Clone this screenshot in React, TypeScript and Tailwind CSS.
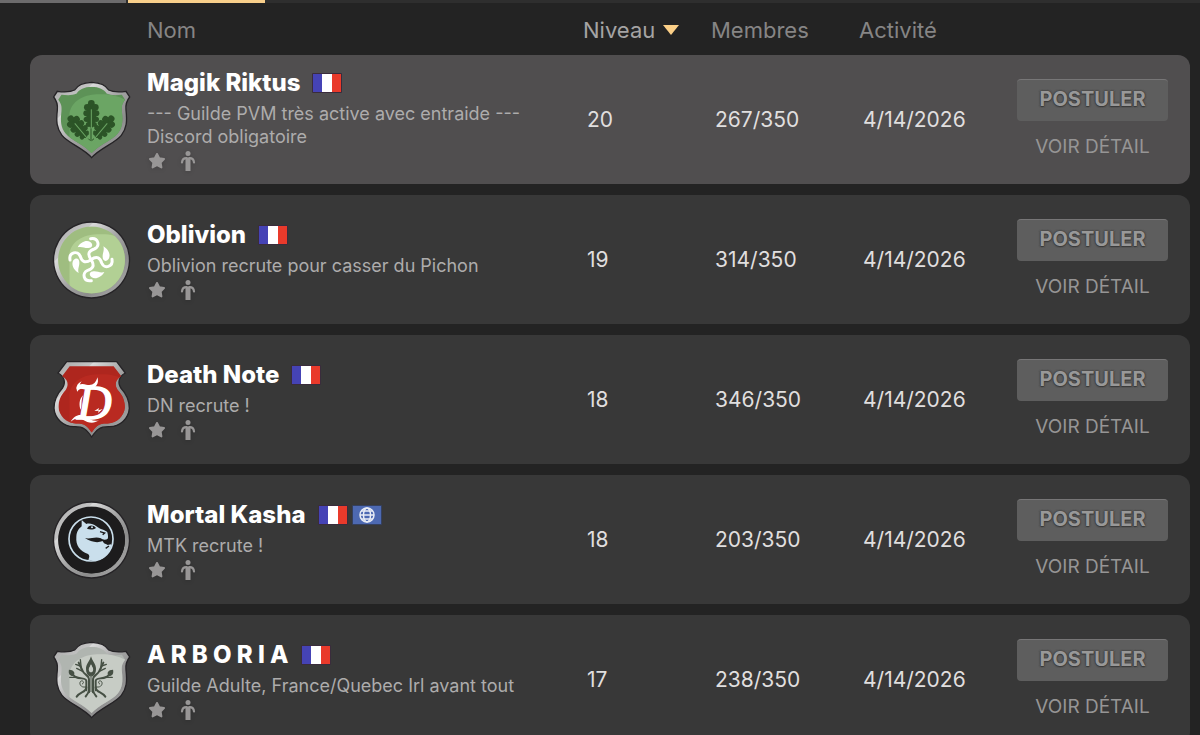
import type { ReactNode } from 'react'

type Flag = 'fr' | 'intl'

interface Guild {
  name: string
  description: string
  flags: Flag[]
  level: number
  members: string
  activity: string
  emblem: ReactNode
}

const SHIELD =
  'M155 67C130 68 112 76 104 90C88 98 68 96 52 94L41 111C50 122 54 132 52 150C48 185 50 205 66 226C85 250 130 264 155 293C180 264 225 250 244 226C260 205 262 185 258 150C256 132 260 122 269 111L258 94C242 96 222 98 206 90C198 76 180 68 155 67Z'
const CREST =
  'M80 65L230 65L256 99C236 110 232 128 243 145C262 165 268 185 268 205C266 235 240 262 205 260C180 260 170 268 155 291C140 268 130 260 105 260C70 262 44 235 42 205C42 185 48 165 67 145C78 128 74 110 54 99Z'
const ROUND = 'M155 66A114 114 0 1 1 154 66Z'

interface EmblemProps {
  id: string
  outline: string
  base: string
  shine: string
  children: ReactNode
}

function Emblem({ id, outline, base, shine, children }: EmblemProps) {
  return (
    <svg viewBox="33 60 240 240" className="mx-auto block size-20" aria-hidden="true">
      <defs>
        <linearGradient id={`${id}-metal`} x1="0" y1="0" x2="1" y2="1">
          <stop offset="0" stopColor="#a5a5a5" />
          <stop offset="0.26" stopColor="#c4c4c4" />
          <stop offset="0.27" stopColor="#dadada" />
          <stop offset="0.5" stopColor="#a4a4a4" />
          <stop offset="0.7" stopColor="#8c8c8c" />
          <stop offset="1" stopColor="#b5b5b5" />
        </linearGradient>
        <clipPath id={`${id}-field`}>
          <path d={outline} transform="translate(155 179) scale(.88) translate(-155 -179)" />
        </clipPath>
      </defs>
      <path d={outline} fill={`url(#${id}-metal)`} stroke="#252326" strokeWidth="4" />
      <g clipPath={`url(#${id}-field)`}>
        <rect x="33" y="60" width="240" height="240" fill={base} />
        <path
          d="M92 300C86 250 90 210 88 165C92 124 130 105 170 103C215 100 245 110 273 130V300Z"
          fill={shine}
        />
      </g>
      {children}
    </svg>
  )
}

function Leaf({ transform }: { transform: string }) {
  return (
    <g transform={transform}>
      <g fill="#2c5427">
        <ellipse cx="0" cy="-48" rx="15" ry="38" />
        <circle cx="0" cy="-83" r="10" />
        <circle cx="-12" cy="-71" r="10" />
        <circle cx="12" cy="-71" r="10" />
        <circle cx="-15" cy="-53" r="9" />
        <circle cx="15" cy="-53" r="9" />
        <circle cx="-15" cy="-35" r="8" />
        <circle cx="15" cy="-35" r="8" />
        <circle cx="-10" cy="-19" r="7" />
        <circle cx="10" cy="-19" r="7" />
      </g>
      <path d="M0 -65V0" stroke="#6ba564" strokeWidth="3" />
    </g>
  )
}

function OakEmblem() {
  return (
    <Emblem id="oak" outline={SHIELD} base="#5d9257" shine="#6ba564">
      <Leaf transform="translate(146 240) rotate(-40)" />
      <Leaf transform="translate(160 240) rotate(40)" />
      <Leaf transform="translate(154 213)" />
      <path d="M153 205V242M145 236L151 242M162 236L155 242" stroke="#2c5427" strokeWidth="3" fill="none" />
      <path d="M148 204V233M158 204V233" stroke="#6ba564" strokeWidth="3" />
    </Emblem>
  )
}

function SwirlArm({ angle }: { angle: number }) {
  return (
    <g transform={`rotate(${angle} 153 179)`}>
      <path
        d="M153 179C140 160 149 151 163 147C182 139 175 112 152 116"
        fill="none"
        stroke="#fff"
        strokeWidth="9"
        strokeLinecap="round"
      />
      <path d="M113 142C122 126 139 119 151 126C161 134 157 144 145 144C134 145 125 138 113 142Z" fill="#fff" />
    </g>
  )
}

function SwirlEmblem() {
  return (
    <Emblem id="swirl" outline={ROUND} base="#9fbd80" shine="#b2d094">
      <SwirlArm angle={0} />
      <SwirlArm angle={90} />
      <SwirlArm angle={180} />
      <SwirlArm angle={270} />
    </Emblem>
  )
}

function LetterEmblem() {
  return (
    <Emblem id="letter" outline={CREST} base="#ae261e" shine="#b92a21">
      <text
        x="111"
        y="237"
        fill="#fff"
        stroke="#fff"
        strokeWidth="4"
        fontSize="144"
        fontStyle="italic"
        fontFamily="Liberation Serif, serif"
      >
        D
      </text>
      <path
        d="M112 155C104 137 119 128 139 134C157 139 168 129 172 112C179 130 167 147 148 147C133 147 121 140 112 155Z"
        fill="#fff"
      />
      <path d="M109 146C110 136 114 129 125 124C117 134 119 138 122 142Z" fill="#fff" />
      <path d="M130 165C122 180 127 194 122 209C117 198 116 177 130 165Z" fill="#fff" />
      <path
        d="M92 245C102 226 121 219 138 230C151 238 161 246 177 241C160 253 143 248 130 240C115 232 105 236 92 245Z"
        fill="#fff"
      />
      <path d="M163 213L177 204L175 211L188 207L174 219L176 212Z" fill="#fff" />
    </Emblem>
  )
}

function DragonEmblem() {
  return (
    <Emblem id="dragon" outline={ROUND} base="#1d1c1d" shine="#1d1c1d">
      <circle cx="153" cy="177" r="66" fill="none" stroke="#cadfec" strokeWidth="5" />
      <path
        d="M125 120L139 132C148 129 160 132 169 139C181 149 195 149 202 157C205 168 205 176 201 181L190 184C190 192 198 191 203 195L213 193C215 207 205 222 195 230C181 241 163 244 145 239C149 231 149 225 144 222C119 214 107 195 109 171C110 153 117 146 125 139Z"
        fill="#cadfec"
      />
      <path d="M141 146C147 134 159 134 168 144C159 150 149 149 141 146Z" fill="#1d1c1d" />
      <circle cx="156" cy="142" r="3" fill="#cadfec" />
      <path
        d="M135 174C151 179 164 168 183 175C190 181 197 180 204 176L209 183L198 184L204 193L194 190L187 183C174 190 151 186 135 174Z"
        fill="#1d1c1d"
      />
      <path d="M180 155L194 159L188 164M197 205L207 198" stroke="#1d1c1d" strokeWidth="4" fill="none" />
    </Emblem>
  )
}

// One half of the tree, mirrored for the other side
function TreeHalf() {
  return (
    <g>
      <g fill="none" stroke="#465044" strokeLinecap="round">
        <path d="M147 217V180C147 163 133 166 128 153L116 128" strokeWidth="6" />
        <path d="M139 211V183C139 172 122 178 107 171L97 164" strokeWidth="6" />
        <path d="M139 202C138 218 120 215 110 230M147 211C145 221 139 226 137 229" strokeWidth="6" />
        <path d="M128 154L110 145M121 138L107 133M124 147L121 119M109 172L89 172" strokeWidth="4" />
        <path d="M136 201C122 204 116 190 122 184C128 179 135 188 127 192" strokeWidth="3" />
        <path d="M150 167C136 156 142 144 147 138" strokeWidth="5" />
      </g>
      <path d="M87 149C102 149 106 158 101 168C89 169 84 160 87 149Z" fill="#465044" />
    </g>
  )
}

function TreeEmblem() {
  return (
    <Emblem id="tree" outline={SHIELD} base="#b0b5b0" shine="#c7ccc5">
      <TreeHalf />
      <g transform="translate(306 0) scale(-1 1)">
        <TreeHalf />
      </g>
      <path
        d="M153 109C157 124 169 133 168 148C166 158 161 163 153 167C145 163 140 158 138 148C137 133 149 124 153 109ZM153 133C147 142 145 147 147 152C149 158 157 158 159 152C161 147 159 142 153 133Z"
        fill="#465044"
        fillRule="evenodd"
      />
      <path d="M153 166V216" stroke="#465044" strokeWidth="3" />
    </Emblem>
  )
}

const guilds: Guild[] = [
  {
    name: 'Magik Riktus',
    description: '--- Guilde PVM très active avec entraide --- Discord obligatoire',
    flags: ['fr'],
    level: 20,
    members: '267/350',
    activity: '4/14/2026',
    emblem: <OakEmblem />,
  },
  {
    name: 'Oblivion',
    description: 'Oblivion recrute pour casser du Pichon',
    flags: ['fr'],
    level: 19,
    members: '314/350',
    activity: '4/14/2026',
    emblem: <SwirlEmblem />,
  },
  {
    name: 'Death Note',
    description: 'DN recrute !',
    flags: ['fr'],
    level: 18,
    members: '346/350',
    activity: '4/14/2026',
    emblem: <LetterEmblem />,
  },
  {
    name: 'Mortal Kasha',
    description: 'MTK recrute !',
    flags: ['fr', 'intl'],
    level: 18,
    members: '203/350',
    activity: '4/14/2026',
    emblem: <DragonEmblem />,
  },
  {
    name: 'A R B O R I A',
    description: 'Guilde Adulte, France/Quebec Irl avant tout',
    flags: ['fr'],
    level: 17,
    members: '238/350',
    activity: '4/14/2026',
    emblem: <TreeEmblem />,
  },
]

function FlagIcon({ flag }: { flag: Flag }) {
  if (flag === 'intl') {
    return (
      <svg viewBox="0 0 30 20" className="h-5 w-[30px]" aria-hidden="true">
        <rect width="30" height="20" rx="1" fill="#34405f" />
        <rect x="1" y="1" width="28" height="18" fill="#4d69b2" />
        <g fill="none" stroke="#e8ecf5" strokeWidth="1.5">
          <circle cx="15" cy="10" r="7" />
          <ellipse cx="15" cy="10" rx="3.5" ry="7" />
          <path d="M8 10H22M9.5 6H20.5M9.5 14H20.5" />
        </g>
      </svg>
    )
  }
  return (
    <svg viewBox="0 0 30 20" className="h-5 w-[30px]" aria-hidden="true">
      <rect width="30" height="20" rx="1" fill="#3a2c3c" />
      <rect x="1" y="1" width="9" height="18" fill="#4543b5" />
      <rect x="10" y="1" width="10" height="18" fill="#fff" />
      <rect x="20" y="1" width="9" height="18" fill="#e93a2b" />
    </svg>
  )
}

function StarIcon() {
  return (
    <svg viewBox="0 0 20 20" className="size-5 drop-shadow-sm" aria-hidden="true">
      <path
        d="M10 3L12.2 7.3L17 8L13.6 11.5L14.4 16.4L10 14.2L5.6 16.4L6.4 11.5L3 8L7.8 7.3Z"
        fill="#989696"
        stroke="#989696"
        strokeWidth="2"
        strokeLinejoin="round"
      />
    </svg>
  )
}

function PersonIcon() {
  return (
    <svg viewBox="0 0 20 20" className="size-5 drop-shadow-sm" aria-hidden="true">
      <circle cx="10" cy="2.5" r="2.5" fill="#989696" />
      <path d="M7.5 6.5H12.5V20H7.5Z" fill="#989696" />
      <path
        d="M8.500 7.2C5.500 7.2 4.2 9 4 11.5M11.500 7.2C14.5 7.2 15.8 9 16 11.5"
        fill="none"
        stroke="#989696"
        strokeWidth="2.2"
        strokeLinecap="round"
      />
    </svg>
  )
}

function GuildRow({ guild, selected }: { guild: Guild; selected: boolean }) {
  return (
    <tr className={selected ? 'h-[129px] bg-[#504e4f]' : 'h-[129px] bg-[#383838]'}>
      <td className="rounded-l-xl">
        <div className="w-[122px]">{guild.emblem}</div>
      </td>
      <td>
        <div className="flex items-center gap-3">
          <span className="text-[24px] leading-[30px] font-extrabold text-white">{guild.name}</span>
          <span className="flex gap-1">
            {guild.flags.map((flag) => (
              <FlagIcon key={flag} flag={flag} />
            ))}
          </span>
        </div>
        <p className="mt-1 max-w-[400px] text-[18px] leading-[23px] text-[#adacac]">{guild.description}</p>
        <div className="mt-[3px] flex gap-[11px]">
          <StarIcon />
          <PersonIcon />
        </div>
      </td>
      <td className="pl-1 text-[21px] text-[#e0dfdf]">{guild.level}</td>
      <td className="pl-1 text-[21px] text-[#e0dfdf]">{guild.members}</td>
      <td className="pl-1 text-[21px] text-[#e0dfdf]">{guild.activity}</td>
      <td className="rounded-r-xl pr-[22px]">
        <div className="flex flex-col gap-3">
          <button
            type="button"
            className="h-[42px] rounded border-t border-[#777677] bg-[#5e5e5e] pb-1 text-[20px] leading-none font-bold text-[#989898] uppercase [text-shadow:0_0_2px_#3a3a3a,0_0_2px_#3a3a3a,0_1px_1px_#3a3a3a]"
          >
            Postuler
          </button>
          <button type="button" className="text-[19px] leading-[27px] text-[#969595] uppercase">
            Voir détail
          </button>
        </div>
      </td>
    </tr>
  )
}

export default function App() {
  return (
    <div className="h-screen overflow-hidden bg-[#232323] font-[Inter,sans-serif]">
      <div className="flex h-[3px] gap-0.5 bg-[#2e2e2e]">
        <div className="w-[126px] bg-[#6c6b6c]" />
        <div className="w-[137px] bg-[#f8cf8b]" />
      </div>
      <div className="pr-[10px] pl-[30px]">
        <table className="w-full table-fixed border-separate border-spacing-x-0 border-spacing-y-[11px] text-left">
          <colgroup>
            <col className="w-[117px]" />
            <col />
            <col className="w-[128px]" />
            <col className="w-[148px]" />
            <col className="w-[158px]" />
            <col className="w-[173px]" />
          </colgroup>
          <thead>
            <tr className="h-[30px] align-bottom text-[22px] leading-[28px] text-[#868585]">
              <td />
              <th className="font-normal">Nom</th>
              <th className="font-normal text-[#a5a4a4]" aria-sort="descending">
                <button type="button" className="flex items-center gap-2">
                  Niveau
                  <svg viewBox="0 0 16 10" className="h-2.5 w-4" aria-hidden="true">
                    <path d="M0 0H16L8 10Z" fill="#fbcf87" />
                  </svg>
                </button>
              </th>
              <th className="font-normal">Membres</th>
              <th className="font-normal">Activité</th>
              <td />
            </tr>
          </thead>
          <tbody>
            {guilds.map((guild, index) => (
              <GuildRow key={guild.name} guild={guild} selected={index === 0} />
            ))}
          </tbody>
        </table>
      </div>
    </div>
  )
}
